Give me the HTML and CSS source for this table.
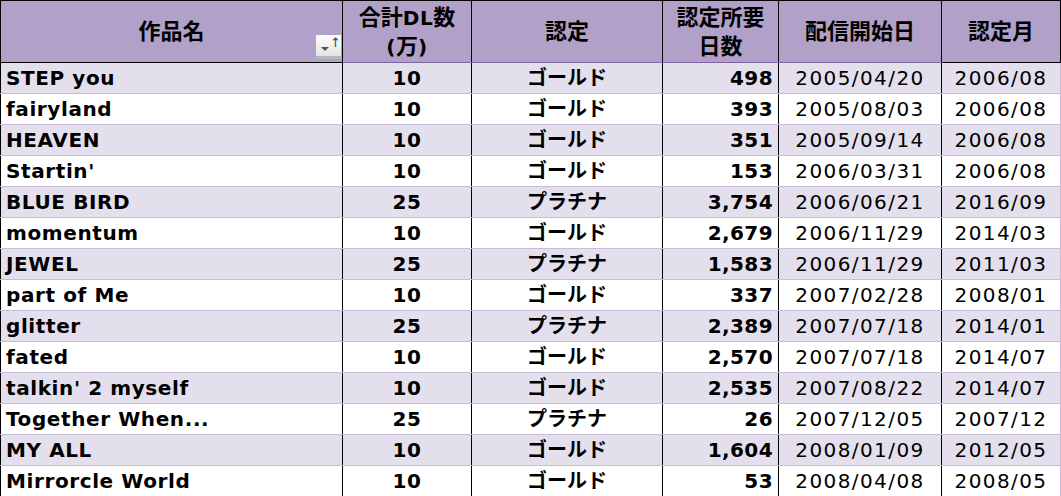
FILE: index.html
```html
<!DOCTYPE html>
<html lang="ja">
<head>
<meta charset="utf-8">
<title>認定作品一覧</title>
<link rel="stylesheet" href="styles.css">
</head>
<body>
<table class="sheet">
  <colgroup>
    <col class="c1"><col class="c2"><col class="c3"><col class="c4"><col class="c5"><col class="c6">
  </colgroup>
  <thead>
    <tr>
      <th class="h-title"><span class="ja">作品名</span>
        <span class="sort-btn"><span class="tri"></span><span class="arrow">↑</span></span>
      </th>
      <th class="h-mid"><span class="ja">合計</span>DL<span class="ja">数</span><br>(<span class="ja">万</span>)</th>
      <th class="h-mid"><span class="ja">認定</span></th>
      <th class="h-mid"><span class="ja">認定所要</span><br><span class="ja">日数</span></th>
      <th class="h-mid"><span class="ja">配信開始日</span></th>
      <th class="h-last"><span class="ja">認定月</span></th>
    </tr>
  </thead>
  <tbody>
    <tr class="band"><td class="name">STEP you</td><td class="num">10</td><td class="cert"><span class="ja">ゴールド</span></td><td class="days">498</td><td class="date">2005/04/20</td><td class="month">2006/08</td></tr>
    <tr><td class="name">fairyland</td><td class="num">10</td><td class="cert"><span class="ja">ゴールド</span></td><td class="days">393</td><td class="date">2005/08/03</td><td class="month">2006/08</td></tr>
    <tr class="band"><td class="name">HEAVEN</td><td class="num">10</td><td class="cert"><span class="ja">ゴールド</span></td><td class="days">351</td><td class="date">2005/09/14</td><td class="month">2006/08</td></tr>
    <tr><td class="name">Startin'</td><td class="num">10</td><td class="cert"><span class="ja">ゴールド</span></td><td class="days">153</td><td class="date">2006/03/31</td><td class="month">2006/08</td></tr>
    <tr class="band"><td class="name">BLUE BIRD</td><td class="num">25</td><td class="cert"><span class="ja">プラチナ</span></td><td class="days">3,754</td><td class="date">2006/06/21</td><td class="month">2016/09</td></tr>
    <tr><td class="name">momentum</td><td class="num">10</td><td class="cert"><span class="ja">ゴールド</span></td><td class="days">2,679</td><td class="date">2006/11/29</td><td class="month">2014/03</td></tr>
    <tr class="band"><td class="name">JEWEL</td><td class="num">25</td><td class="cert"><span class="ja">プラチナ</span></td><td class="days">1,583</td><td class="date">2006/11/29</td><td class="month">2011/03</td></tr>
    <tr><td class="name">part of Me</td><td class="num">10</td><td class="cert"><span class="ja">ゴールド</span></td><td class="days">337</td><td class="date">2007/02/28</td><td class="month">2008/01</td></tr>
    <tr class="band"><td class="name">glitter</td><td class="num">25</td><td class="cert"><span class="ja">プラチナ</span></td><td class="days">2,389</td><td class="date">2007/07/18</td><td class="month">2014/01</td></tr>
    <tr><td class="name">fated</td><td class="num">10</td><td class="cert"><span class="ja">ゴールド</span></td><td class="days">2,570</td><td class="date">2007/07/18</td><td class="month">2014/07</td></tr>
    <tr class="band"><td class="name">talkin' 2 myself</td><td class="num">10</td><td class="cert"><span class="ja">ゴールド</span></td><td class="days">2,535</td><td class="date">2007/08/22</td><td class="month">2014/07</td></tr>
    <tr><td class="name">Together When...</td><td class="num">25</td><td class="cert"><span class="ja">プラチナ</span></td><td class="days">26</td><td class="date">2007/12/05</td><td class="month">2007/12</td></tr>
    <tr class="band"><td class="name">MY ALL</td><td class="num">10</td><td class="cert"><span class="ja">ゴールド</span></td><td class="days">1,604</td><td class="date">2008/01/09</td><td class="month">2012/05</td></tr>
    <tr><td class="name">Mirrorcle World</td><td class="num">10</td><td class="cert"><span class="ja">ゴールド</span></td><td class="days">53</td><td class="date">2008/04/08</td><td class="month">2008/05</td></tr>
  </tbody>
</table>
</body>
</html>
```
FILE: styles.css
```css
html, body {
  margin: 0;
  padding: 0;
  background: #ffffff;
}

.sheet {
  border-collapse: collapse;
  table-layout: fixed;
  width: 1060px;
  font-family: "DejaVu Sans", "Noto Sans CJK JP", sans-serif;
  font-size: 20px;
  color: #000;
}

.c1 { width: 342px; }
.c2 { width: 129px; }
.c3 { width: 191px; }
.c4 { width: 116px; }
.c5 { width: 163px; }
.c6 { width: 119px; }

.ja {
  font-family: "Noto Sans CJK JP", sans-serif;
  font-size: 20px;
  line-height: 20px;
  letter-spacing: 0;
}

thead tr {
  height: 62px;
}

th {
  height: 60px;
  box-sizing: border-box;
  background: #b1a0c7;
  font-weight: bold;
  padding: 2px 0 0 0;
  line-height: 29px;
  text-align: center;
  vertical-align: middle;
  border-top: 1px solid #000;
  border-left: 1px solid #000;
  border-bottom: 1px solid #8064a2;
  letter-spacing: 0.6px;
}

th .ja {
  font-size: 22px;
  line-height: 22px;
}

.h-title {
  position: relative;
  border-bottom-color: #000;
}

.h-last {
  border-right: 1px solid #000;
  border-bottom-color: #000;
}

.sort-btn {
  position: absolute;
  right: 1px;
  bottom: 3px;
  width: 25px;
  height: 24px;
  background: linear-gradient(#ffffff, #e4e4e4);
  border-bottom: 3px solid #b4b8bc;
  box-sizing: border-box;
}

.sort-btn .tri {
  position: absolute;
  left: 5px;
  top: 12px;
  width: 0;
  height: 0;
  border-left: 4px solid transparent;
  border-right: 4px solid transparent;
  border-top: 4px solid #555;
}

.sort-btn .arrow {
  position: absolute;
  left: 14px;
  top: -2px;
  font-family: "DejaVu Sans", sans-serif;
  font-size: 13px;
  font-weight: normal;
  line-height: 20px;
  color: #444;
  letter-spacing: 0;
}

tbody tr {
  height: 31px;
}

tbody tr.band td {
  background: #e4dfec;
}

td {
  height: 30px;
  box-sizing: border-box;
  padding: 0;
  border-bottom: 1px solid #c7bcd8;
  border-left: 1px solid #000;
  white-space: nowrap;
  vertical-align: middle;
  line-height: 22px;
}

.name {
  text-align: left;
  padding-left: 5px;
  font-weight: bold;
  letter-spacing: 0.6px;
}

.num {
  text-align: center;
  font-weight: bold;
  letter-spacing: 0.6px;
}

.cert {
  text-align: center;
  font-weight: bold;
}

.days {
  text-align: right;
  padding-right: 5px;
  font-weight: bold;
  letter-spacing: 0.4px;
}

.date {
  text-align: center;
  letter-spacing: 1.4px;
}

.month {
  text-align: center;
  letter-spacing: 1.4px;
  border-right: 1px solid #c7bcd8;
}
```
